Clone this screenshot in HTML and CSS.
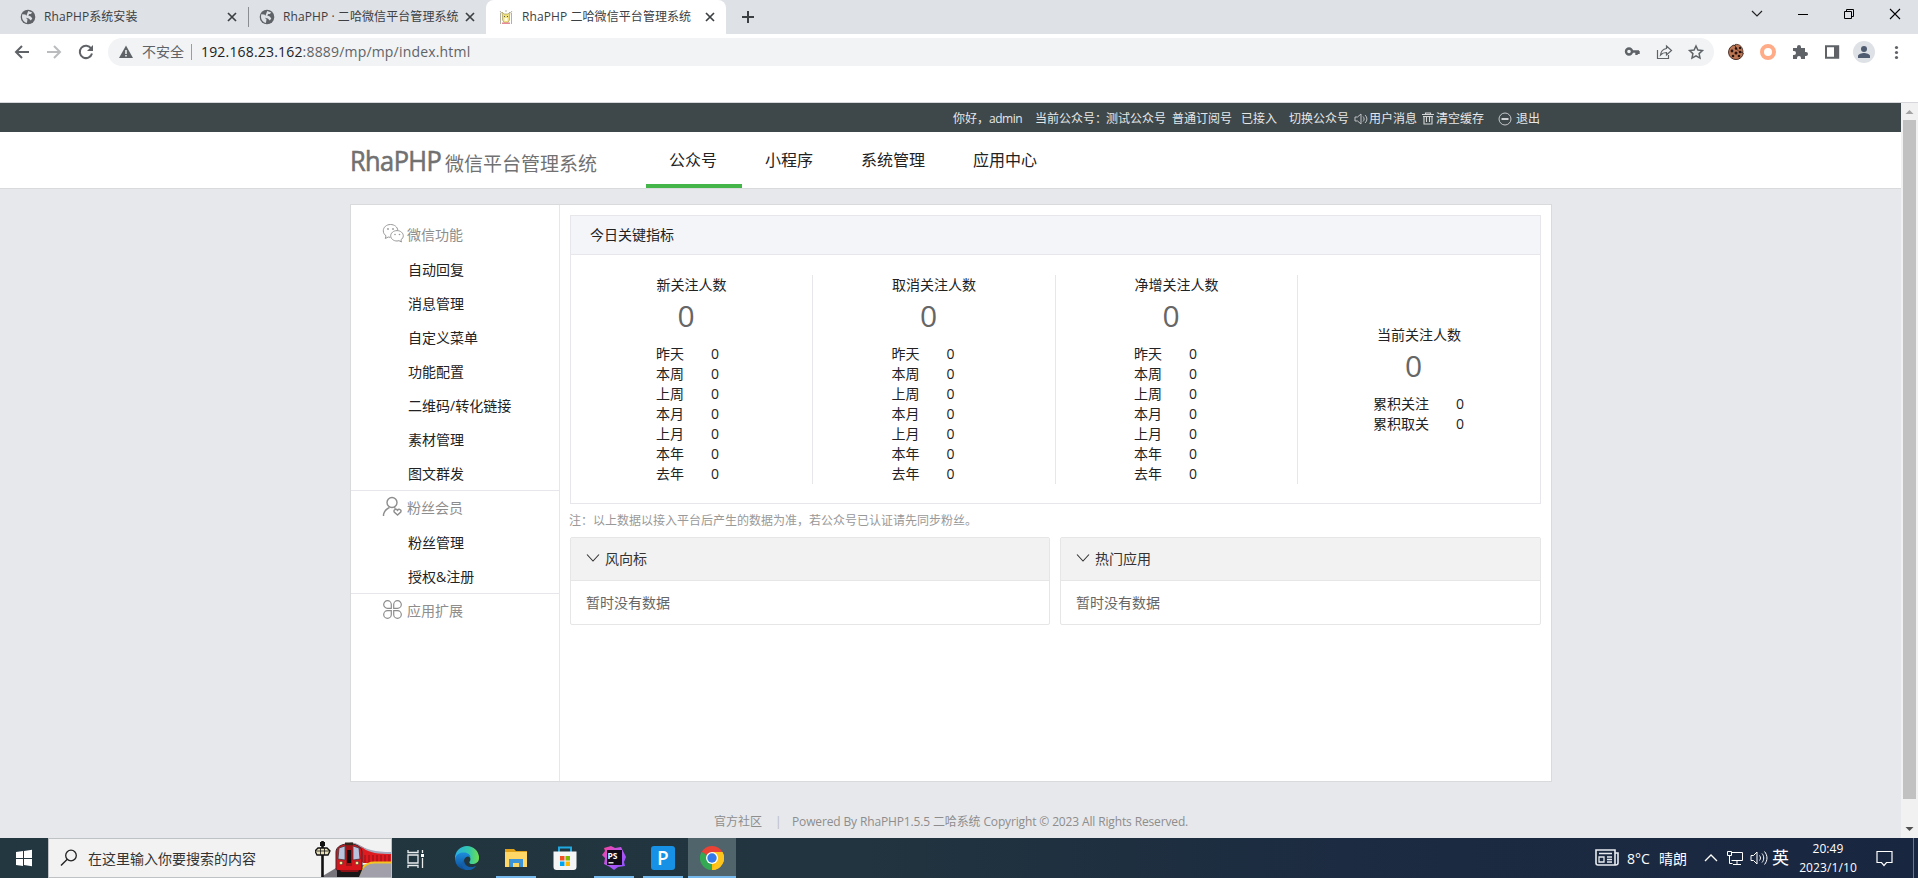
FILE: index.html
```
<!DOCTYPE html>
<html lang="zh-CN">
<head>
<meta charset="utf-8">
<title>RhaPHP 二哈微信平台管理系统</title>
<link rel="stylesheet" href="styles.css">
</head>
<body>
<svg width="0" height="0" class="defs">
  <symbol id="globe" viewBox="0 0 16 16"><circle cx="8" cy="8" r="7.3" fill="#5f6368"/><path d="M2.2 5.2l3.2.3 1.600 2-.7 1.700 1.200 1.400-.6 3.400C4 13.400 2 10.800 2 8zM8.200 2l4 1.600-1.300 1.300-1.700.2-.9 1.500 2.500.8 1.500 2-1.500 2-2-2-2-.5-.5-2z" fill="#dee1e6" /></symbol>
  <symbol id="x" viewBox="0 0 16 16"><path d="M4 4l8 8M12 4l-8 8" stroke="#3c4043" stroke-width="1.700"/></symbol>
  <symbol id="down" viewBox="0 0 14 14"><path d="M1 3.500l6 6.500 6-6.500" fill="none" stroke="#333" stroke-width="1.100"/></symbol>
</svg>
<div class="screen">
  <header class="tabs">
    <div class="tab tab-first"><svg class="i16"><use href="#globe"/></svg><span class="tt t1">RhaPHP系统安装</span><svg class="i16"><use href="#x"/></svg></div>
    <div class="tab tab-second"><svg class="i16"><use href="#globe"/></svg><span class="tt t2">RhaPHP · 二哈微信平台管理系统</span><svg class="i16"><use href="#x"/></svg></div>
    <div class="tab tab-active"><svg class="i16" viewBox="0 0 16 16"><path d="M4.500 7L4 3l2 2h4l2-2-.5 4v4l-2 3h-3l-2-3z" fill="#f0e07c" stroke="#a89c62" stroke-width=".7"/><path d="M6 7.500h1m2 0h1" stroke="#555"/><path d="M6.500 9h3v3h-3z" fill="#fffbe5"/><path d="M4 13.500h8V15H4z" fill="#e58a98"/><path d="M2.500 4v11M13.500 4v11M2 2l1.500 2M14 2l-1.500 2M8 1v2" stroke="#aaa89a" stroke-width=".9"/></svg><span class="tt t3">RhaPHP 二哈微信平台管理系统</span><svg class="i16"><use href="#x"/></svg></div>
    <svg class="plus" viewBox="0 0 16 16"><path d="M8 2v12M2 8h12" stroke="#3c4043" stroke-width="2"/></svg>
    <div class="winctl">
      <svg viewBox="0 0 46 28"><path d="M18 11l5 5 5-5" fill="none" stroke="#222" stroke-width="1.200"/></svg>
      <svg viewBox="0 0 46 28"><path d="M18 14.500h10" stroke="#000"/></svg>
      <svg viewBox="0 0 46 28"><path d="M18.500 11.500h7v7h-7zM20.500 11.500v-2h7v7h-2" fill="none" stroke="#000"/></svg>
      <svg viewBox="0 0 46 28"><path d="M18 9l10 10M28 9L18 19" stroke="#000" stroke-width="1.100"/></svg>
    </div>
  </header>
  <div class="toolbar">
    <div class="navbtns">
      <svg viewBox="0 0 32 32"><path d="M23 16H10.500M16 10l-6 6 6 6" fill="none" stroke="#5f6368" stroke-width="2"/></svg>
      <svg viewBox="0 0 32 32"><path d="M9 16h12.500M16 10l6 6-6 6" fill="none" stroke="#babcbe" stroke-width="2"/></svg>
      <svg viewBox="0 0 32 32"><path d="M21.200 12.500A6.200 6.200 0 1 0 22 17.500" fill="none" stroke="#5f6368" stroke-width="2"/><path d="M23 9v6h-6z" fill="#5f6368"/></svg>
    </div>
    <div class="omnibox">
      <svg class="warn" viewBox="0 0 16 16"><path d="M8 1.500L15 14H1z" fill="#5f6368"/><path d="M8 6v4M8 11v1.500" stroke="#fff" stroke-width="1.400"/></svg>
      <span class="unsafe">不安全</span><i class="bar"></i><span class="url"><b>192.168.23.162</b>:8889/mp/mp/index.html</span>
      <div class="omni-icons">
        <svg viewBox="0 0 32 32"><circle cx="13" cy="15.500" r="3" fill="none" stroke="#5f6368" stroke-width="2.400"/><path d="M16 15.500h7M20.500 15v4M22.500 15v3" fill="none" stroke="#5f6368" stroke-width="2.400"/></svg>
        <svg viewBox="0 0 32 32"><path d="M9.500 14v8.500h11V19M18.500 10l5 4.500-5 4.500v-2.500c-3 0-4.500.8-6 2.500.5-4 2.500-6 6-6.500z" fill="none" stroke="#5f6368" stroke-width="1.200"/></svg>
        <svg viewBox="0 0 32 32"><path d="M16 10l1.900 4.100 4.500.5-3.300 3 .9 4.500-4-2.300-4 2.300.9-4.500-3.300-3 4.500-.5z" fill="none" stroke="#5f6368" stroke-width="1.500"/></svg>
      </div>
    </div>
    <div class="ext">
      <svg viewBox="0 0 32 32"><path d="M14 9a7.400 7.400 0 1 0 9.300 8L21 16l-1-2-3-.5-1-2.500z" fill="#bc7653" stroke="#492d24"/><path d="M15 8.500c5-1 8 3 8 8l-4-1-3-3z" fill="#bc7653" stroke="#492d24" stroke-width=".8"/><g fill="#261310"><circle cx="12" cy="15" r="1.400"/><circle cx="16" cy="17" r="1.500"/><circle cx="13" cy="20" r="1.300"/><circle cx="19" cy="20" r="1.300"/><circle cx="20" cy="16" r="1.300"/><circle cx="16" cy="12.500" r="1.200"/><circle cx="20" cy="12" r="1.200"/></g></svg>
      <svg viewBox="0 0 32 32"><circle cx="16" cy="16" r="6" fill="none" stroke="#ffab87" stroke-width="4"/></svg>
      <svg viewBox="0 0 32 32"><path d="M9 12h4v-1a2 2 0 0 1 4 0v1h4v4h1a2 2 0 0 1 0 4h-1v3h-4v-1a2 2 0 0 0-4 0v1H9v-4h1a2 2 0 0 0 0-4H9z" fill="#5f6368"/></svg>
      <svg viewBox="0 0 32 32"><path d="M10 10.300h12.200v11.400H10z" fill="none" stroke="#5f6368" stroke-width="2"/><path d="M18 10h5v12h-5z" fill="#5f6368"/></svg>
      <svg viewBox="0 0 32 32"><circle cx="16" cy="16" r="11" fill="#dee1e6"/><circle cx="16" cy="13" r="3" fill="#4f5b70"/><path d="M10 22v-2c0-2 4-3 6-3s6 1 6 3v2z" fill="#4f5b70"/></svg>
      <svg viewBox="0 0 32 32"><g fill="#5f6368"><circle cx="16.500" cy="11.500" r="1.600"/><circle cx="16.500" cy="16.500" r="1.600"/><circle cx="16.500" cy="21.500" r="1.600"/></g></svg>
    </div>
  </div>
  <div class="bookmarks"></div>

  <main class="viewport">
    <div class="page">
      <div class="topbar">
        <span class="s-hello">你好，<b>admin</b></span><span class="s-cur">当前公众号：</span><span class="s-test">测试公众号</span><span class="s-type">普通订阅号</span><span class="s-in">已接入</span><span class="s-switch">切换公众号</span>
        <svg class="tb-ic" viewBox="0 0 14 14"><path d="M1 5h2.500L7 2v10L3.500 9H1zM9 4.500c1.500 1.500 1.500 3.500 0 5M11 3c2.500 2.500 2.500 5.500 0 8" fill="none" stroke="#bfc3c4"/></svg><span class="s-msg">用户消息</span>
        <svg class="tb-ic" viewBox="0 0 14 14"><path d="M1 2.500h12M4.500 2V1h5v1M3 4.500V12h8V4.500M5.500 4.500V10M8.500 4.500V10M2 4.500h10" fill="none" stroke="#d3d5d6" stroke-width="1.100"/></svg><span class="s-clear">清空缓存</span>
        <svg class="tb-out" viewBox="0 0 14 14"><circle cx="7" cy="7" r="6" fill="none" stroke="#c6c9ca"/><path d="M3.500 7h7" stroke="#fff" stroke-width="1.500"/></svg><span class="s-out">退出</span>
      </div>
      <div class="head">
        <div class="logo"><span class="brand">RhaPHP</span><span class="sub">微信平台管理系统</span></div>
        <nav><a class="on">公众号</a><a>小程序</a><a>系统管理</a><a>应用中心</a></nav>
      </div>
      <div class="wrap">
        <aside>
          <section><h3><svg viewBox="0 0 22 22"><path d="M8.500 1.500c4 0 7 2.500 7.300 5.800M8.500 1.500C4.500 1.500 1.300 4.200 1.300 7.800c0 2 1 3.800 2.700 5L3.300 15.500l3-1.500 2 .4M15 7.600c-3.500 0-6.300 2.400-6.300 5.200 0 3 2.800 5.200 6.300 5.200l2-.3 2.500 1.300-.6-2.200c1.500-1 2.400-2.400 2.400-4 0-2.800-2.800-5.200-6.300-5.200z" fill="none" stroke="#999"/><circle cx="6" cy="6" r=".9" fill="#999"/><circle cx="11" cy="6" r=".9" fill="#999"/><circle cx="13" cy="11.500" r=".8" fill="#999"/><circle cx="17.500" cy="11.500" r=".8" fill="#999"/></svg>微信功能</h3>
            <a>自动回复</a><a>消息管理</a><a>自定义菜单</a><a>功能配置</a><a>二维码/转化链接</a><a>素材管理</a><a>图文群发</a></section>
          <section><h3><svg viewBox="0 0 22 22"><circle cx="10" cy="6.500" r="5" fill="none" stroke="#8d8d8d" stroke-width="1.400"/><path d="M1.500 20c0-4 2.500-7 6-8.500M12 11.500l1.500.8M15.500 19l-3.300-3c-1-2.500 2-3.500 3.300-1.700 1.300-1.800 4.300-.8 3.300 1.700z" fill="none" stroke="#8d8d8d" stroke-width="1.400"/></svg>粉丝会员</h3>
            <a>粉丝管理</a><a>授权&amp;注册</a></section>
          <section><h3><svg viewBox="0 0 22 22"><path d="M9.300 9.300H5.500a3.800 3.800 0 1 1 3.800-3.800zM11.700 9.300h3.800a3.800 3.800 0 1 0-3.800-3.800zM9.300 11.700H5.500a3.800 3.800 0 1 0 3.800 3.800zM11.700 11.700h3.800a3.800 3.800 0 1 1-3.800 3.800z" fill="none" stroke="#8d8d8d" stroke-width="1.200"/></svg>应用扩展</h3></section>
        </aside>
        <div class="content">
          <div class="kpi">
            <h2>今日关键指标</h2>
            <div class="cols">
              <div class="col"><div class="n5"><h4>新关注人数</h4><em>0</em><dl><dt>昨天</dt><dd>0</dd><dt>本周</dt><dd>0</dd><dt>上周</dt><dd>0</dd><dt>本月</dt><dd>0</dd><dt>上月</dt><dd>0</dd><dt>本年</dt><dd>0</dd><dt>去年</dt><dd>0</dd></dl></div></div>
              <div class="col"><div class="n6"><h4>取消关注人数</h4><em>0</em><dl><dt>昨天</dt><dd>0</dd><dt>本周</dt><dd>0</dd><dt>上周</dt><dd>0</dd><dt>本月</dt><dd>0</dd><dt>上月</dt><dd>0</dd><dt>本年</dt><dd>0</dd><dt>去年</dt><dd>0</dd></dl></div></div>
              <div class="col"><div class="n6"><h4>净增关注人数</h4><em>0</em><dl><dt>昨天</dt><dd>0</dd><dt>本周</dt><dd>0</dd><dt>上周</dt><dd>0</dd><dt>本月</dt><dd>0</dd><dt>上月</dt><dd>0</dd><dt>本年</dt><dd>0</dd><dt>去年</dt><dd>0</dd></dl></div></div>
              <div class="col"><div class="total"><h4>当前关注人数</h4><em>0</em><dl><dt>累积关注</dt><dd>0</dd><dt>累积取关</dt><dd>0</dd></dl></div></div>
            </div>
          </div>
          <p class="note">注：以上数据以接入平台后产生的数据为准，若公众号已认证请先同步粉丝。</p>
          <div class="cards">
            <div class="card"><h5><svg><use href="#down"/></svg>风向标</h5><p>暂时没有数据</p></div>
            <div class="card"><h5><svg><use href="#down"/></svg>热门应用</h5><p>暂时没有数据</p></div>
          </div>
        </div>
      </div>
      <footer><span class="f1">官方社区</span><span class="f2">|</span><span class="f3">Powered By RhaPHP1.5.5 二哈系统 Copyright © 2023 All Rights Reserved.</span></footer>
    </div>
    <div class="scroll"><svg viewBox="0 0 17 17"><path d="M4.500 11l4-4 4 4z" fill="#a3a3a3"/></svg><i></i><svg viewBox="0 0 17 17"><path d="M4.500 6l4 4 4-4z" fill="#505050"/></svg></div>
  </main>

  <div class="taskbar">
    <svg class="start" viewBox="0 0 48 40"><path d="M16 14l7-1v7h-7zM24 12.900l8-1.100V20h-8zM16 21h7v7l-7-1zM24 21h8v7.200L24 27z" fill="#fff"/></svg>
    <div class="search">
      <svg class="mag" viewBox="0 0 18 18"><circle cx="11" cy="6.500" r="5.300" fill="none" stroke="#222" stroke-width="1.300"/><path d="M7.300 10.300L1 16.500" stroke="#222" stroke-width="1.400"/></svg>
      <span>在这里输入你要搜索的内容</span>
      <svg class="train" viewBox="0 0 76 38">
        <path d="M6 38l15-9 9-2 46-3v14z" fill="#77757b"/><path d="M32 5c9-4 15 4 24 7 6 2 12 2 20 2v10H48z" fill="#e01b20"/><path d="M34 3c8 0 13 6 22 8 6 1.500 12 2 20 2v2c-12 0-22-1-28-6z" fill="#a6a9bc"/>
        <path d="M50 16v8M54 16v8M58 16v8M62 16v8M66 16v8M70 16v8M74 16v8" stroke="#8e1118"/>
        <path d="M44 38c2-8 8-14 16-14h16v14z" fill="#a19faa"/><path d="M43 38c2-8 8-14.500 16-14.500h17" fill="none" stroke="#f4c320" stroke-width="2"/>
        <path d="M21 30V13C21 2 47 2 47 13v17c0 4-26 4-26 0z" fill="#d7151d" stroke="#40262b"/><path d="M23 20l1-11 6-2v14zM45 20l-1-11-6-2v14z" fill="#b9c3dd" stroke="#333" stroke-width=".7"/><path d="M31 7h6v20h-6z" fill="#a31419"/><path d="M32 11h4v13h-4z" fill="#160d10"/><circle cx="26" cy="24" r="1.800" fill="#ffe98e" stroke="#333" stroke-width=".6"/><circle cx="42" cy="24" r="1.800" fill="#ffe98e" stroke="#333" stroke-width=".6"/><path d="M30 3.500h8v3h-8z" fill="#33251a"/><path d="M22 31h25l-3 7H22z" fill="#191718"/><path d="M25 31h19l-1 2H26z" fill="#8e1118"/>
        <path d="M7.500 2v36" stroke="#111" stroke-width="2.600"/><path d="M0 12l3-3h9l3 3-2 4H2z" fill="#e8e1b8" stroke="#111" stroke-width="1.300"/><path d="M0 12h15M5.500 9v7M9.500 9v7" stroke="#111" stroke-width=".8"/><path d="M5 3h5v4H5z" fill="#111"/>
      </svg>
    </div>
    <div class="apps">
      <div class="app"><svg viewBox="0 0 24 24"><path d="M4 9h10v8H4zM4 4v2.500h10V4M4 22v-2.500h10V22M18.500 4v3M18.500 12v10" fill="none" stroke="#e8eced" stroke-width="1.300"/><path d="M17 8h3v3h-3z" fill="#fff"/></svg></div>
      <div class="app"><svg viewBox="0 0 24 24"><defs><linearGradient id="ea"><stop offset="0" stop-color="#2baee4"/><stop offset=".6" stop-color="#33c8a8"/><stop offset="1" stop-color="#72df50"/></linearGradient><linearGradient id="eb" x2="0" y2="1"><stop offset="0" stop-color="#1d8ddc"/><stop offset="1" stop-color="#0c4a95"/></linearGradient></defs><path d="M0 12A12 12 0 0 1 24 12c0 4-3 6-7 6-3 0-3-2-2-3 1.500-3-1-6-5-6-5 0-9 2-10 6z" fill="url(#ea)"/><path d="M0 13c1-5 5-6.500 9-6.500 4 0 6.500 2.500 6.500 5C12 9 9 12 9 15c0 5 5 8 12 5A12 12 0 0 1 0 13z" fill="url(#eb)"/><path d="M9 14c0 6 6 9 12 6-3 4-7 4.300-10 4-5-2-5-7-2-10z" fill="#155fa8"/></svg></div>
      <div class="app run grp"><svg viewBox="0 0 24 24"><path d="M1 3h9l2 2h11v16H1z" fill="#e0a11b"/><path d="M1 6h22v15H1z" fill="#ffd766"/><path d="M5 21v-8h14v8h-4v-4H9v4z" fill="#3d95d8"/></svg></div>
      <div class="app"><svg viewBox="0 0 24 24"><path d="M6 7V1.500h12V7" fill="none" stroke="#1fa9e0" stroke-width="2"/><path d="M.5 5.500h23V21a3 3 0 0 1-3 3h-17a3 3 0 0 1-3-3z" fill="#f5f5f5"/><path d="M7 10h4.500v4.500H7z" fill="#f25022"/><path d="M12.500 10H17v4.500h-4.500z" fill="#7fba00"/><path d="M7 15.500h4.500V20H7z" fill="#00a4ef"/><path d="M12.500 15.500H17V20h-4.500z" fill="#ffb900"/></svg></div>
      <div class="app run"><svg viewBox="0 0 24 24"><defs><linearGradient id="ps" x2="1" y2="1"><stop offset="0" stop-color="#ff3f91"/><stop offset=".5" stop-color="#b657f2"/><stop offset="1" stop-color="#8a50ff"/></linearGradient></defs><path d="M2 2l7-2 4 2 6-1 3 6 2 4-2 5 1 4-7 1-4 3-4-3-6-3 1-6-3-3 3-4z" fill="url(#ps)"/><path d="M5 4h15v15H5z" fill="#100b16"/><path d="M6.500 16h5v1.500h-5z" fill="#ddd"/><text x="5.500" y="12.500" class="pst">PS</text></svg></div>
      <div class="app run"><svg viewBox="0 0 24 24"><rect width="24" height="24" rx="3" fill="#1791e5"/><text x="6" y="19" class="pt">P</text></svg></div>
      <div class="app sel"><svg viewBox="0 0 24 24"><path d="M12 12L1.600 6A12 12 0 0 1 22.400 6z" fill="#ea4335"/><path d="M12 12L22.400 6A12 12 0 0 1 12 24z" fill="#fbbc05"/><path d="M12 12v12A12 12 0 0 1 1.600 6z" fill="#34a853"/><path d="M12 6h10.400A12 12 0 0 1 12 24l5-9z" fill="#fdc51c"/><circle cx="12" cy="12" r="6" fill="#fff"/><circle cx="12" cy="12" r="4.700" fill="#3479ea"/></svg></div>
    </div>
    <div class="tray">
      <svg class="news" viewBox="0 0 24 18"><path d="M1 1h19v15H3c-1.500 0-2-1-2-2zM20 4h3v10c0 1.500-1 2-2.500 2H18" fill="none" stroke="#e7ebef" stroke-width="1.600"/><path d="M4 4.500h13M12 8h5M12 10.500h5M12 13h5M4 8h5v5H4z" fill="none" stroke="#e7ebef" stroke-width="1.300"/></svg>
      <span class="temp">8°C</span><span class="sky">晴朗</span>
      <svg class="up" viewBox="0 0 14 10"><path d="M1 8l6-6 6 6" fill="none" stroke="#fff" stroke-width="1.300"/></svg>
      <svg class="net" viewBox="0 0 18 16"><path d="M6 2.500h10.500v8H5.500M11 10.500v3.500M7 14.500h8M1.500 1.500h4v4h-4zM3.500 5.500v8h3" fill="none" stroke="#fff"/></svg>
      <svg class="vol" viewBox="0 0 18 16"><path d="M1 5.500h2.500L7 2v12l-3.500-3.500H1zM9.500 5.500c1.300 1.500 1.300 3.500 0 5M12 3.500c2.300 2.500 2.300 6.500 0 9M14.500 1.500c3.300 4 3.300 9 0 13" fill="none" stroke="#fff"/></svg>
      <span class="ime">英</span>
      <div class="clock"><span>20:49</span><span>2023/1/10</span></div>
      <svg class="notif" viewBox="0 0 17 17"><path d="M1 1.500h15v11h-5.500L8 15.500l-2.500-3H1z" fill="none" stroke="#fff" stroke-width="1.200"/></svg>
      <i class="desk"></i>
    </div>
  </div>
</div>
</body>
</html>
```
FILE: styles.css
```
* { box-sizing: border-box; margin: 0; padding: 0; }
body { font: 14px/20px "Open Sans", "Noto Sans CJK SC", sans-serif; color: #222; overflow: hidden; }
h2, h3, h4, h5, em, b { font-weight: 400; font-style: normal; }
svg { display: block; flex: none; }
span, a { white-space: nowrap; }
.defs { position: absolute; }
.screen { width: 1918px; height: 878px; display: grid; grid-template-rows: 34px 32px 37px 735px 40px; }

/* browser tabs */
.tabs { display: flex; background: #dee1e6; }
.tab { display: flex; align-items: center; height: 34px; font-size: 12px; color: #3c4043; }
.i16 { width: 16px; height: 16px; }
.tt { margin-left: 8px; flex: none; text-align: left; letter-spacing: .08px; }
.tab-first { width: 249px; padding-left: 20px; border-right: 1px solid #8a8d91; height: 20px; margin-top: 7px; }
.t1 { width: 180px; }
.tab-second { width: 237px; padding-left: 10px; }
.t2 { width: 179px; }
.tab-active { width: 240px; padding-left: 12px; background: #fff; border-radius: 8px 8px 0 0; }
.t3 { width: 180px; }
.plus { width: 16px; height: 16px; margin: 9px 0 0 14px; }
.winctl { display: flex; margin-left: auto; }
.winctl svg { width: 46px; height: 28px; }

/* address bar */
.toolbar { display: flex; background: #fff; padding-top: 2px; }
.navbtns { display: flex; width: 108px; padding-left: 6px; }
.navbtns svg, .omni-icons svg, .ext svg { width: 32px; height: 32px; }
.omnibox { display: flex; align-items: center; width: 1606px; height: 28px; margin-top: 2px; background: #f1f3f4; border-radius: 14px; padding-left: 10px; font-size: 14px; color: #5f6368; }
.warn { width: 16px; height: 16px; }
.unsafe { margin-left: 8px; width: 49px; }
.bar { width: 1px; height: 16px; background: #9a9da1; }
.url { margin-left: 9px; letter-spacing: .18px; }
.url b { color: #202124; }
.omni-icons { display: flex; margin: 0 2px 0 auto; }
.ext { display: flex; margin-left: 6px; }
.bookmarks { background: #fff; border-bottom: 1px solid #d5d7da; }

/* site */
.viewport { display: flex; }
.page { width: 1901px; height: 735px; background: #e7e8eb; }
.topbar { height: 29px; background: #3e474a; display: flex; align-items: center; padding: 3px 0 0 953px; color: #e6e8e8; font-size: 12px; }
.topbar span { flex: none; }
.topbar b { letter-spacing: -.5px; }
.s-hello { width: 82px; } .s-cur { width: 71px; } .s-test { width: 66px; } .s-type { width: 69px; } .s-in { width: 48px; }
.s-switch { width: 65px; } .s-msg { width: 53px; } .s-clear { width: 63px; }
.tb-ic { width: 14px; height: 14px; margin-bottom: 1px; margin-right: 1px; }
.s-msg { margin-right: -1px; } .s-clear { margin-right: -1px; }
.tb-out { width: 14px; height: 14px; margin-right: 4px; }
.head { height: 57px; background: #fff; border-bottom: 1px solid #d9dadc; display: flex; padding-left: 350px; }
.logo { width: 296px; display: flex; align-items: baseline; color: #717171; padding-top: 13px; }
.brand { width: 95px; font-size: 27px; line-height: 32px; letter-spacing: -.6px; -webkit-text-stroke: .6px #717171; transform: scaleX(.94); transform-origin: left; }
.sub { font-size: 19px; line-height: 32px; }
nav { display: flex; }
nav a { padding: 0 25px 0 23px; height: 56px; line-height: 56px; font-size: 16px; }
nav .on { border-bottom: 4px solid #44b549; }
.wrap { margin: 15px 0 0 350px; width: 1202px; height: 578px; border: 1px solid #d9dadc; background: #fff; display: flex; }
aside { width: 209px; border-right: 1px solid #e7e7eb; padding-top: 13px; }
aside section + section { border-top: 1px solid #e7e7eb; }
aside h3 { display: flex; align-items: center; height: 34px; padding-left: 31px; gap: 3px; font-size: 14px; color: #8d8d8d; }
aside h3 svg { width: 22px; height: 22px; margin-top: -2px; }
aside a { display: block; height: 34px; line-height: 35px; padding-left: 57px; }
.content { padding: 10px 0 0 10px; width: 981px; }
.kpi { width: 971px; height: 289px; border: 1px solid #e7e7eb; }
.kpi h2 { height: 39px; line-height: 38px; background: #f4f5f9; border-bottom: 1px solid #e7e7eb; font-size: 14px; padding-left: 19px; }
.cols { display: grid; grid-template-columns: 242px 243px 242px 242px; padding-top: 20px; height: 228px; }
.col { display: flex; justify-content: center; align-items: center; border-right: 1px solid #e7e7eb; }
.col:last-child { border: 0; }
.n5 { width: 71px; } .n6 { width: 85px; } .total { width: 92px; }
.col h4 { font-size: 14px; text-align: center; white-space: nowrap; }
.col em { display: block; font-size: 30px; line-height: 42px; height: 49px; color: #666; text-align: center; padding-right: 11px; }
.col dl { display: grid; grid-template-columns: 55px 12px; line-height: 20px; }
.total dl { grid-template-columns: 83px 12px; }
.note { font-size: 12px; line-height: 33px; height: 33px; color: #999; margin-left: -1px; }
.cards { display: flex; gap: 10px; }
.card { width: 480px; height: 88px; border: 1px solid #e6e6e6; border-radius: 2px; }
.card + .card { width: 481px; }
.card h5 { display: flex; align-items: center; gap: 5px; height: 43px; background: #f2f2f2; border-bottom: 1px solid #e6e6e6; padding-left: 15px; font-size: 14px; color: #333; }
.card h5 svg { width: 14px; height: 14px; margin-top: -2px; }
.card p { line-height: 43px; padding-left: 15px; color: #666; }
footer { display: flex; padding: 30px 0 0 714px; font-size: 12px; color: #8d8d8d; }
.f1 { width: 61px; } .f2 { width: 17px; color: #bbb; }
.f3 { letter-spacing: -.14px; }
.scroll { width: 17px; background: #f1f1f1; display: flex; flex-direction: column; align-items: center; }
.scroll svg { width: 17px; height: 17px; }
.scroll i { width: 13px; height: 679px; margin-bottom: auto; background: #c1c1c1; }

/* task bar */
.taskbar { display: flex; background: linear-gradient(90deg, #223740 0, #21343f 45%, #1c2b41 70%, #192640 100%); color: #fff; }
.start { width: 48px; height: 40px; }
.search { width: 344px; height: 40px; background: #f2f2f2; border: 1px solid #bfc2c4; display: flex; align-items: center; padding-left: 11px; }
.mag { width: 18px; height: 18px; margin-right: 10px; }
.search span { width: 228px; color: #333; padding-top: 1px; }
.train { width: 76px; height: 38px; }
.apps { display: flex; gap: 1px; }
.app { width: 48px; height: 40px; display: flex; justify-content: center; align-items: center; border-bottom: 2px solid transparent; padding-top: 2px; }
.app svg { width: 24px; height: 24px; }
.app:first-child { width: 50px; padding-right: 2px; }
.run { border: 0; background: linear-gradient(#76b9ed, #76b9ed) center bottom / 40px 2px no-repeat; padding-top: 0; }
.sel { background: #50646b; border-bottom-color: #76b9ed; }
.pst { font: bold 8.500px "Open Sans", sans-serif; fill: #fff; }
.pt { font: 600 19px "Open Sans", sans-serif; fill: #fff; }
.tray { display: flex; align-items: center; margin-left: auto; width: 323px; flex: none; }
.news { width: 24px; height: 18px; margin-right: 8px; }
.temp { width: 32px; padding-top: 1px; } .sky { width: 45px; padding-top: 1px; }
.up { width: 14px; height: 10px; margin-right: 8px; }
.net { width: 18px; height: 16px; margin-right: 6px; }
.vol { width: 18px; height: 16px; margin-right: 4px; }
.ime { font-size: 17px; width: 25px; }
.clock { width: 62px; display: flex; flex-direction: column; align-items: center; font-size: 12px; line-height: 19px; letter-spacing: .1px; }
.notif { width: 17px; height: 17px; margin-left: 17px; }
.desk { width: 1px; height: 40px; background: #6c7688; margin-left: auto; margin-right: 4px; }
```
